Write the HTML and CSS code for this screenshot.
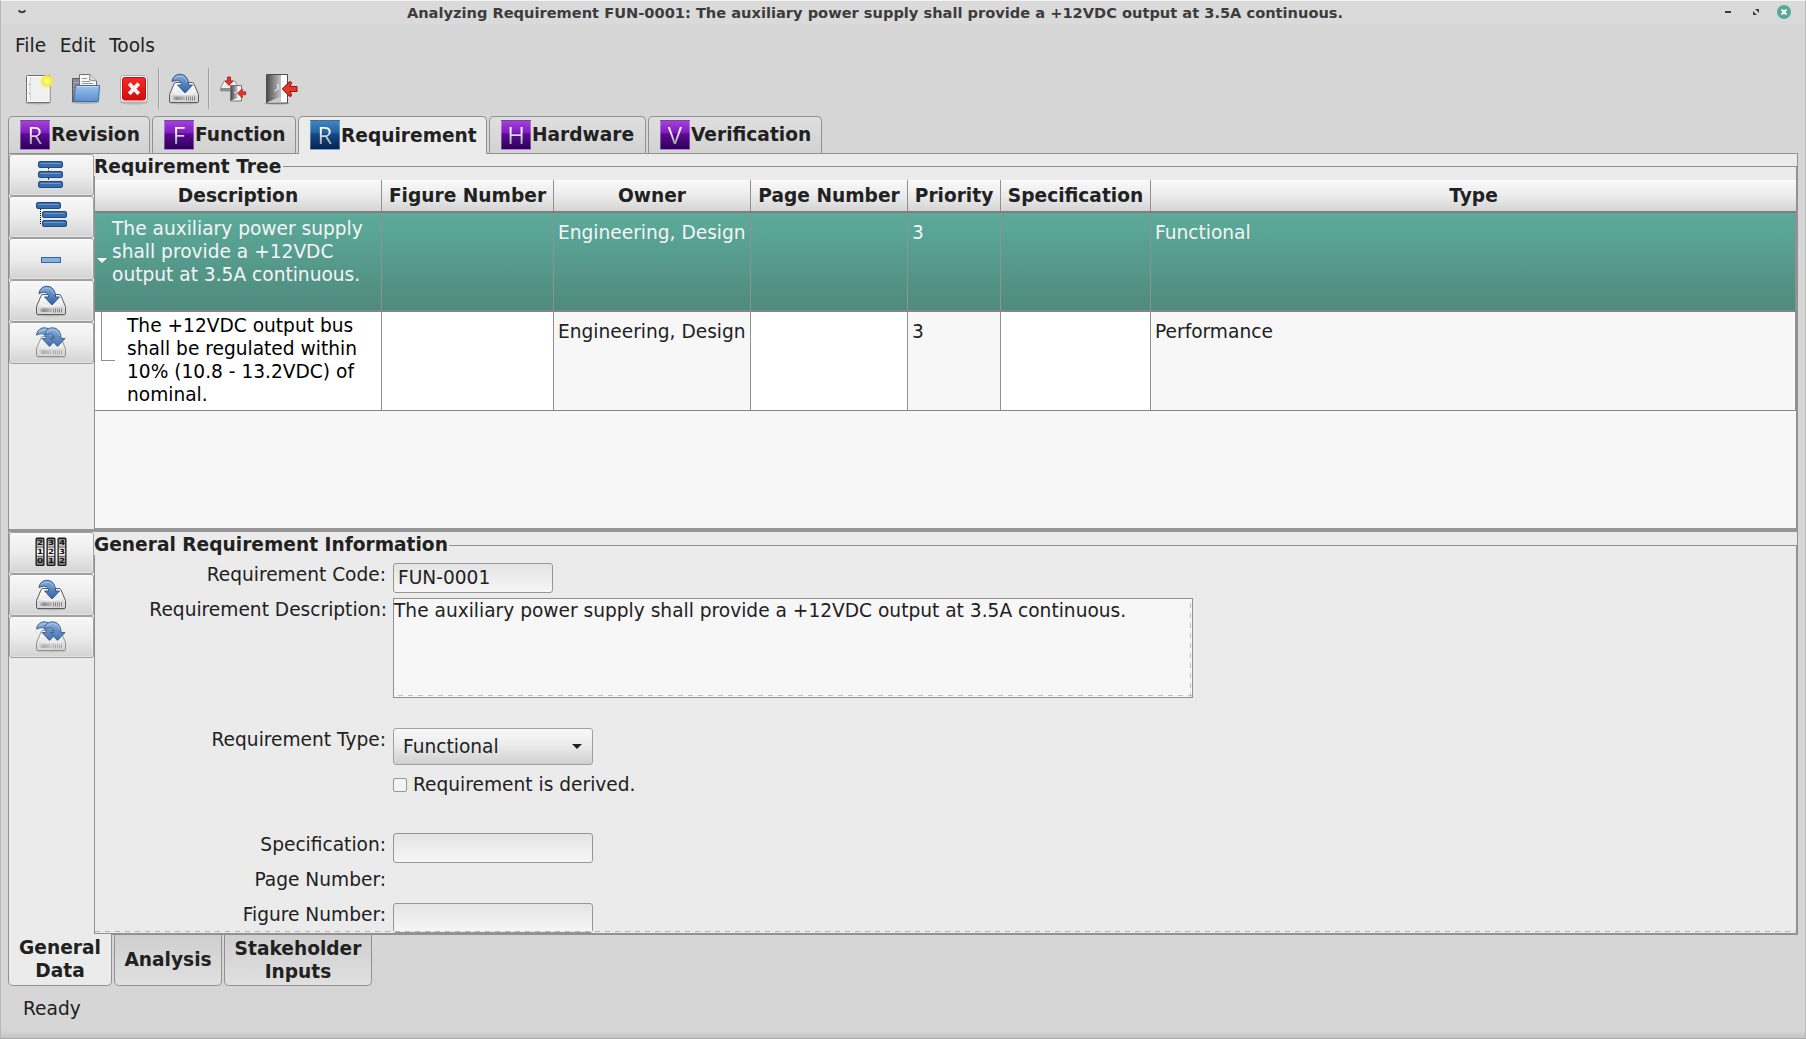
FILE: index.html
```html
<!DOCTYPE html>
<html lang="en">
<head>
<meta charset="utf-8">
<title>Analyzing Requirement FUN-0001</title>
<link rel="stylesheet" href="styles.css">
</head>
<body>
<svg class="defs" aria-hidden="true">
  <defs>
    <linearGradient id="gBlue" x1="0" y1="0" x2="0" y2="1"><stop offset="0" stop-color="#86abd8"/><stop offset="1" stop-color="#2f62a6"/></linearGradient>
    <linearGradient id="gFolder" x1="0" y1="0" x2="0" y2="1"><stop offset="0" stop-color="#9cc3ee"/><stop offset="1" stop-color="#5b8fcd"/></linearGradient>
    <linearGradient id="gDrive" x1="0" y1="0" x2="0" y2="1"><stop offset="0" stop-color="#ffffff"/><stop offset="1" stop-color="#d4d4d4"/></linearGradient>
    <linearGradient id="gPanel" x1="0" y1="0" x2="1" y2="0"><stop offset="0" stop-color="#c4c4c4"/><stop offset=".3" stop-color="#8c8c8c"/><stop offset="1" stop-color="#bdbdbd"/></linearGradient>
    <linearGradient id="gDoor" x1="0" y1="0" x2="1" y2="0"><stop offset="0" stop-color="#4c4c4c"/><stop offset="1" stop-color="#c4c4c4"/></linearGradient>
    <linearGradient id="gRed" x1="0" y1="0" x2="0" y2="1"><stop offset="0" stop-color="#f32b2b"/><stop offset="1" stop-color="#d40c0c"/></linearGradient>
    <linearGradient id="gDrum" x1="0" y1="0" x2="0" y2="1"><stop offset="0" stop-color="#8a8a8a"/><stop offset=".5" stop-color="#ffffff"/><stop offset="1" stop-color="#707070"/></linearGradient>
    <radialGradient id="gSun"><stop offset="0" stop-color="#ffffd0"/><stop offset=".45" stop-color="#fbf33a"/><stop offset=".75" stop-color="#f4ec3a" stop-opacity=".9"/><stop offset="1" stop-color="#f4ec3a" stop-opacity="0"/></radialGradient>
    <symbol id="drive" viewBox="0 0 32 32">
      <ellipse cx="16" cy="30" rx="15" ry="1.5" fill="#000" opacity=".16"/>
      <path d="M8 9.500H24Q25.500 9.500 26 11L30.500 21.500V28Q30.500 29.500 29 29.500H3Q1.500 29.500 1.500 28V21.500L6 11Q6.500 9.500 8 9.500Z" fill="url(#gDrive)" stroke="#5c5c5c"/>
      <path d="M2.500 22H29.500V28.500H2.500Z" fill="#d6d6d6"/>
      <path d="M5 23.500H17V27H5Z" fill="url(#gPanel)"/>
      <path d="M18.500 23.500V27.500M20.500 23.500V27.500M22.500 23.500V27.500M24.500 23.500V27.500M26.500 23.500V27.500" stroke="#858585"/>
      <ellipse cx="16" cy="17.500" rx="11" ry="3.600" fill="none" stroke="#fff" opacity=".8"/>
    </symbol>
    <symbol id="arrow" viewBox="0 0 32 32">
      <path d="M4 8.600C4.500 4 8 1.200 12 1.300C17.500 1.500 20.300 5.500 20.600 12H24.500L17 19.900L9.600 12H13.600C13.500 8 10.500 5.600 4 8.600Z" fill="url(#gBlue)" stroke="#2c5794" stroke-linejoin="round"/>
      <path d="M6.500 5.600C10 1.800 17.500 2.300 19 9" fill="none" stroke="#c3d7ee" opacity=".6"/>
    </symbol>
    <symbol id="save" viewBox="0 0 32 32"><use href="#drive"/><use href="#arrow"/></symbol>
    <symbol id="saveAll" viewBox="0 0 32 32">
      <use href="#drive" opacity=".6"/>
      <g opacity=".9"><use href="#arrow" x="-2.500" y="-.5"/><use href="#arrow" x="5.500" y="-.5"/></g>
    </symbol>
    <symbol id="bar" viewBox="0 0 25 7"><rect x=".5" y=".5" width="24" height="6" rx="1.500" fill="#3a6cab" stroke="#1f4b8c"/><path d="M2.500 2.500H22.500" stroke="#6d97cb"/></symbol>
    <symbol id="calc" viewBox="0 0 32 32">
      <g id="drum"><rect x=".5" y=".5" width="9" height="28.500" rx="1.500" fill="#181818"/><rect x="1.800" y="2" width="6.400" height="26" fill="url(#gDrum)"/><path d="M2 10H8M2 19.500H8" stroke="#444" stroke-width=".8"/></g>
      <use href="#drum" x="11"/><use href="#drum" x="22"/>
      <g class="digits" transform="scale(1.25 1)"><text x="4" y="8">2</text><text x="4" y="17.200">1</text><text x="4" y="26">0</text><text x="12.800" y="8">3</text><text x="12.800" y="17.200">2</text><text x="12.800" y="26">1</text><text x="21.600" y="8">4</text><text x="21.600" y="17.200">3</text><text x="21.600" y="26">2</text></g>
    </symbol>
    <symbol id="redArrow" viewBox="0 0 16 16"><path d="M.8 8L7.800 1Q10 .5 9.500 3L8 5.500H15V10.500H8L9.500 13Q10 15.500 7.800 15Z" fill="#e2392f" stroke="#9d130d" stroke-linejoin="round"/></symbol>
  </defs>
</svg>

<div class="window">
  <header class="titlebar">
    <svg class="title-menu" width="12" height="8" viewBox="0 0 12 8"><path d="M2.500 2.500Q6 6 9.500 2.500" fill="none" stroke="#3c3c3c" stroke-width="1.800"/></svg>
    <h1 class="title">Analyzing Requirement FUN-0001: The auxiliary power supply shall provide a +12VDC output at 3.5A continuous.</h1>
    <div class="controls">
      <svg width="14" height="14" viewBox="0 0 14 14"><path d="M4 6H10V8H4Z" fill="#3c3c3c"/></svg>
      <svg width="14" height="14" viewBox="0 0 14 14"><path d="M6 4H10V8ZM4 6V10H8Z" fill="#3c3c3c"/></svg>
      <svg width="14" height="14" viewBox="0 0 14 14"><circle cx="7" cy="7" r="7" fill="#56a897"/><path d="M4.500 4.500L9.500 9.500M9.500 4.500L4.500 9.500" stroke="#fff" stroke-width="1.800"/></svg>
    </div>
  </header>

  <nav class="menubar"><span>File</span><span>Edit</span><span>Tools</span></nav>

  <div class="toolbar">
    <span class="tool"><svg width="32" height="32" viewBox="0 0 32 32"><ellipse cx="16" cy="30" rx="13" ry="1.500" opacity=".18"/><rect x="4.500" y="2.500" width="23.500" height="27" rx="1" fill="#f0f0f0" stroke="#6e6e6e"/><rect x="5.500" y="3.500" width="21.500" height="25" fill="none" stroke="#fff"/><path d="M8.500 4V28" stroke="#d9d9d9"/><path d="M7 11.500H8M7 20.500H8" stroke="#888"/><circle cx="25" cy="8" r="7" fill="url(#gSun)"/></svg></span>
    <span class="tool"><svg width="32" height="32" viewBox="0 0 32 32"><ellipse cx="15" cy="29.500" rx="14" ry="1.500" opacity=".18"/><path d="M2.500 5.500H14V28.500H2.500Z" fill="#8b8b8b" stroke="#5a5a5a"/><path d="M3 9.500H10M3 12.500H10M3 15.500H10" stroke="#aaa"/><path d="M9.500 1.500H20L26.500 8V15H9.500Z" fill="#f6f6f6" stroke="#727272"/><path d="M20 1.500L19.500 7L26.500 8" fill="#ddd" stroke="#888"/><path d="M12 5.500H17M12 8.500H20M12 10.500H23" stroke="#999"/><path d="M5.500 12.500H29.500L28.500 27.500Q28.500 28.500 27.500 28.500H4.500Q3.500 28.500 4 27Z" fill="url(#gFolder)" stroke="#3a6cab"/><path d="M6.500 13.500H28.400" stroke="#c3dcf6"/></svg></span>
    <span class="tool"><svg width="32" height="32" viewBox="0 0 32 32"><ellipse cx="16" cy="29.500" rx="14" ry="2" opacity=".15"/><rect x="2.500" y="2.500" width="27" height="26.500" rx="3" fill="#fff" stroke="#aaa"/><rect x="4.500" y="4.500" width="23" height="22.500" rx="2" fill="url(#gRed)" stroke="#cf0d0d"/><path d="M12.500 12L19.500 19.500M19.500 12L12.500 19.500" stroke="#f4f4f4" stroke-width="3.800" stroke-linecap="square"/></svg></span>
    <i class="sep"></i>
    <span class="tool"><svg width="32" height="32"><use href="#save"/></svg></span>
    <i class="sep"></i>
    <span class="tool"><svg width="32" height="32" viewBox="0 0 32 32"><path d="M6 8H17L20 14V18H2.500V15.500Z" fill="#eee" stroke="#999"/><path d="M2.500 15H14V18H2.500Z" fill="#8d8d8d"/><path d="M9.500 4H12.500V8H15L11 12.500L7 8H9.500Z" fill="#e2392f" stroke="#9d130d" stroke-width=".8"/><path d="M12.500 12.500H23.500V28H12.500Z" fill="#f2f2f2" stroke="#777"/><path d="M13 13H19.500V25L13 27.500Z" fill="url(#gDoor)"/><path d="M16 20L18 19" stroke="#fff"/><use href="#redArrow" x="19" y="15.500" width="9.500" height="9.500"/></svg></span>
    <span class="tool"><svg width="36" height="32" viewBox="-2 0 36 32"><ellipse cx="11" cy="30.500" rx="13" ry="1.200" opacity=".2"/><path d="M.5 1.500H21.500V30H.5Z" fill="#fff" stroke="#4c4c4c"/><path d="M1 2H15V24L1 29.500Z" fill="url(#gDoor)"/><path d="M2 29.500L15 24V29.500Z" fill="#c9c9c9"/><path d="M8.500 18L12.500 15.500L11.500 11" fill="none" stroke="#fff"/><use href="#redArrow" x="15.500" y="7.500" width="16.500" height="17"/></svg></span>
  </div>

  <div class="tabs">
    <div class="tab tab-revision"><b class="badge"><span>R</span></b>Revision</div>
    <div class="tab tab-function"><b class="badge"><span>F</span></b>Function</div>
    <div class="tab tab-requirement active"><b class="badge blue"><span>R</span></b>Requirement</div>
    <div class="tab tab-hardware"><b class="badge"><span>H</span></b>Hardware</div>
    <div class="tab tab-verification"><b class="badge"><span>V</span></b>Verification</div>
  </div>

  <main class="notebook">
    <section class="pane upper">
      <div class="side">
        <button class="side-btn"><svg width="32" height="32"><path d="M13.500 8V22" stroke="#000" stroke-dasharray="2 1.500"/><use href="#bar" x="3" y="2" width="25" height="7"/><use href="#bar" x="3" y="12" width="25" height="7"/><use href="#bar" x="3" y="22" width="25" height="7"/></svg></button>
        <button class="side-btn"><svg width="32" height="32"><path d="M5.500 8V23" stroke="#000" stroke-dasharray="1 1"/><use href="#bar" x="1" y="1" width="25" height="7"/><use href="#bar" x="7" y="10" width="25" height="7"/><use href="#bar" x="7" y="19" width="25" height="7"/></svg></button>
        <button class="side-btn"><svg width="32" height="32"><rect x="6.500" y="14.500" width="19" height="5" fill="#88b1e0" stroke="#3465a4"/></svg></button>
        <button class="side-btn"><svg width="32" height="32"><use href="#save"/></svg></button>
        <button class="side-btn"><svg width="32" height="32"><use href="#saveAll"/></svg></button>
      </div>
      <div class="frame">
        <h2 class="frame-title">Requirement Tree</h2>
        <div class="frame-body tree">
          <div class="row head"><div>Description</div><div>Figure Number</div><div>Owner</div><div>Page Number</div><div>Priority</div><div>Specification</div><div>Type</div></div>
          <div class="row selected">
            <div class="desc"><svg class="expander" width="10" height="5" viewBox="0 0 10 5"><path d="M0 0H10L5 5Z" fill="#fff"/></svg><p>The auxiliary power supply shall provide a +12VDC output at 3.5A continuous.</p></div>
            <div></div><div>Engineering, Design</div><div></div><div>3</div><div></div><div>Functional</div>
          </div>
          <div class="row child">
            <div class="desc edit"><i class="branch"></i><p>The +12VDC output bus shall be regulated within 10% (10.8 - 13.2VDC) of nominal.</p></div>
            <div class="edit"></div><div>Engineering, Design</div><div class="edit"></div><div>3</div><div class="edit"></div><div>Performance</div>
          </div>
        </div>
      </div>
    </section>

    <section class="pane lower">
      <div class="side">
        <button class="side-btn"><svg width="32" height="32"><use href="#calc"/></svg></button>
        <button class="side-btn"><svg width="32" height="32"><use href="#save"/></svg></button>
        <button class="side-btn"><svg width="32" height="32"><use href="#saveAll"/></svg></button>
      </div>
      <div class="frame">
        <h2 class="frame-title">General Requirement Information</h2>
        <div class="frame-body form">
          <label>Requirement Code:</label><div class="entry code">FUN-0001</div>
          <label class="wide">Requirement Description:</label><div class="textview">The auxiliary power supply shall provide a +12VDC output at 3.5A continuous.</div>
          <label>Requirement Type:</label>
          <div class="stack">
            <div class="combo">Functional<svg width="10" height="5" viewBox="0 0 10 5"><path d="M0 0H10L5 5Z" fill="#222"/></svg></div>
            <div class="check"><i class="box"></i>Requirement is derived.</div>
          </div>
          <label>Specification:</label><div class="entry"></div>
          <label>Page Number:</label><div></div>
          <label>Figure Number:</label><div class="entry"></div>
        </div>
      </div>
    </section>
  </main>

  <div class="bottom-tabs">
    <div class="btab active">General<br>Data</div>
    <div class="btab analysis">Analysis</div>
    <div class="btab inputs">Stakeholder<br>Inputs</div>
  </div>

  <footer class="status">Ready</footer>
</div>
</body>
</html>
```
FILE: styles.css
```css
* { box-sizing: border-box; }

body {
  margin: 0;
  font: 18.6px/23px "DejaVu Sans", sans-serif;
  color: #212121;
}

h1, h2, p { margin: 0; font-size: inherit; }
i { font-style: normal; }
svg { display: block; flex: none; }
.defs { position: absolute; width: 0; height: 0; }
.digits { font: bold 7px "DejaVu Sans", sans-serif; text-anchor: middle; fill: #111; }

.window {
  display: flex;
  flex-direction: column;
  width: 1806px;
  height: 1039px;
  overflow: hidden;
  border: 1px solid #b8b8b8;
  border-top-color: #f4f4f4;
  border-bottom-color: #a8a8a8;
  background: linear-gradient(#d6d6d6, #d6d6d6 1029px, #c6c6c6);
}

/* Title bar */
.titlebar {
  display: grid;
  grid-template-columns: 120px 1fr 176px;
  flex: none;
  height: 23px;
  background: #dadada;
}
.title-menu { margin: 7px 0 0 15px; }
.title {
  font-size: 14.61px;
  text-align: center;
  color: #3c3c3c;
  white-space: nowrap;
}
.controls {
  display: flex;
  justify-content: flex-end;
  gap: 14px;
  padding: 4px 14px 0 0;
}

/* Menu and toolbar */
.menubar {
  display: flex;
  flex: none;
  gap: 13.5px;
  height: 42px;
  padding: 10px 0 0 14px;
}
.toolbar {
  display: flex;
  flex: none;
  height: 50px;
  padding-left: 13px;
}
.tool {
  display: flex;
  justify-content: center;
  width: 48px;
  padding-top: 7px;
}
.sep {
  width: 2px;
  height: 41px;
  margin-top: 2px;
  border-left: 1px solid #a0a0a0;
  border-right: 1px solid #e0e0e0;
}

/* Upper tabs */
.tabs {
  display: flex;
  flex: none;
  gap: 2px;
  height: 37px;
  padding-left: 7px;
}
.tab {
  display: flex;
  padding: 6px 0 0 11px;
  border: 1px solid #919191;
  border-bottom: 0;
  border-radius: 5px 5px 0 0;
  background: linear-gradient(#dfdfdf, #d2d2d2);
  font-weight: bold;
}
.tab.active {
  position: relative;
  z-index: 1;
  height: 38px;
  padding-top: 7px;
  background: #ebebeb;
}
.tab-revision { width: 142px; }
.tab-function { width: 144px; }
.tab-requirement { width: 189px; }
.tab-hardware { width: 157px; }
.tab-verification { width: 174px; }

.badge {
  flex: none;
  width: 30px;
  height: 30px;
  margin: -3px 1px 0 0;
  border: 1px solid #ffffff4d;
  background: linear-gradient(#a63fdc, #7c1bbd 44%, #5e0a96 45%, #2b0057);
  font: 400 24px/28px "Open Sans", sans-serif;
  text-align: center;
}
.tab.active .badge { margin-top: -4px; }
.badge.blue { background: linear-gradient(#3f86bf, #21609f 44%, #134a88 45%, #072350); }
.badge span {
  display: block;
  color: transparent;
  background: linear-gradient(#fff 30%, #a0a0a0 85%);
  background-clip: text;
  -webkit-background-clip: text;
}

/* Notebook panes */
.notebook {
  flex: none;
  width: 1790px;
  height: 782px;
  margin-left: 7px;
  border: 1px solid #919191;
  background: #ebebeb;
}
.pane {
  display: grid;
  grid-template-columns: 85px 1fr;
}
.upper { height: 378px; border-bottom: 3px solid #969696; }
.lower { height: 402px; }

.side { display: flex; flex-direction: column; }
.side-btn {
  display: flex;
  align-items: center;
  justify-content: center;
  width: 85px;
  height: 42px;
  padding: 0 2px 0 0;
  border: 1px solid #a0a0a0;
  border-radius: 3px;
  background: linear-gradient(#f8f8f8, #ececec 50%, #d3d3d3);
  box-shadow: inset 0 0 0 1px #ffffff66;
}

.frame { display: flex; flex-direction: column; min-width: 0; min-height: 0; }
.frame-title {
  display: flex;
  flex: none;
  align-items: flex-end;
  height: 22px;
  line-height: 19px;
  white-space: nowrap;
}
.frame-title::after {
  content: "";
  flex: 1;
  height: 9px;
  margin-left: 1px;
  border: solid #919191;
  border-width: 1px 1px 0 0;
}
.upper .frame-title::after { margin-left: 2px; }
.frame-body {
  flex: 1;
  min-height: 0;
  border: solid #919191;
  border-width: 0 1px 0 1px;
}
.lower .frame-title { height: 23px; line-height: 21px; }

/* Requirement tree */
.tree { padding-top: 4px; border-bottom: 1px solid #969696; background: linear-gradient(#ebebeb 4px, #f7f7f7 4px); }
.row {
  display: grid;
  grid-template-columns: 287px 172px 197px 157px 93px 150px 1fr;
}
.row > div { border-right: 1px solid #919191; }
.head {
  height: 33px;
  border-bottom: 2px solid #7f7f7f;
  background: linear-gradient(#f9f9f9, #ececec 50%, #d4d4d4);
  box-shadow: inset 0 1px #fff;
  font-weight: bold;
  text-align: center;
}
.row.head > div { padding-top: 4px; }
.row.head > div:last-child { border-right: 0; }
.selected, .child { height: 99px; border-bottom: 2px solid #858585; }
.selected > div, .child > div { padding: 8px 0 0 4px; white-space: nowrap; }
.selected {
  color: #f5f5f5;
  background: linear-gradient(#5cab9b, #4f8a7e);
}
.child { border-bottom-width: 1px; }
.row > .desc { display: flex; padding: 0; white-space: normal; }
.desc p { width: 254px; padding-top: 4px; }
.selected .expander { margin: 45px 5px 0 2px; }
.edit { background: #fff; color: #000; }
.child .desc p { padding-top: 2px; }
.branch {
  flex: none;
  width: 14px;
  height: 49px;
  margin: 0 12px 0 6px;
  border: solid #919191;
  border-width: 0 0 1px 1px;
}

/* Requirement form */
.form {
  position: relative;
  display: grid;
  grid-template-columns: 291px 1fr;
  grid-template-rows: 35px 130px 105px 35px 35px 30px;
  column-gap: 7px;
  align-items: start;
  padding-top: 8px;
  border-bottom: 1px solid #919191;
}
.form::after {
  content: "";
  position: absolute;
  left: 0;
  right: 0;
  bottom: 1px;
  height: 1px;
  background: repeating-linear-gradient(90deg, #b4b4b4 0 5px, #ebebeb 5px 10px);
}
.form label { text-align: right; white-space: nowrap; }
.form .wide { margin-right: -1px; }
.entry {
  width: 200px;
  height: 30px;
  padding: 2px 0 0 4px;
  border: 1px solid #969696;
  border-radius: 3px;
  background: linear-gradient(#e4e4e4, #f6f6f6);
}
.entry.code { width: 160px; }
.textview {
  position: relative;
  width: 800px;
  height: 100px;
  border: 1px solid #919191;
  background: #f7f7f7;
  white-space: nowrap;
}
.textview::before, .textview::after { content: ""; position: absolute; }
.textview::before {
  left: 4px;
  right: 0;
  bottom: 1px;
  height: 1px;
  background: repeating-linear-gradient(90deg, #c0c0c0 0 5px, transparent 5px 10px);
}
.textview::after {
  top: 4px;
  bottom: 0;
  right: 1px;
  width: 1px;
  background: repeating-linear-gradient(#c0c0c0 0 5px, transparent 5px 10px);
}
.combo {
  display: flex;
  align-items: center;
  justify-content: space-between;
  width: 200px;
  height: 37px;
  padding: 0 10px 0 9px;
  border: 1px solid #a0a0a0;
  border-radius: 3px;
  background: linear-gradient(#f9f9f9, #ececec 45%, #d0d0d0);
}
.check { display: flex; gap: 6px; padding-top: 8px; }
.box {
  width: 14px;
  height: 14px;
  margin-top: 5px;
  border: 1px solid #969696;
  border-radius: 2px;
  background: #f4f4f4;
}

/* Bottom tabs and status */
.bottom-tabs {
  display: flex;
  flex: none;
  gap: 2px;
  height: 51px;
  padding-left: 7px;
}
.btab {
  display: grid;
  place-content: center;
  width: 108px;
  border: 1px solid #919191;
  border-top: 0;
  border-radius: 0 0 5px 5px;
  background: linear-gradient(#cfcfcf, #e0e0e0);
  font-weight: bold;
  text-align: center;
}
.btab.active {
  position: relative;
  width: 104px;
  height: 52px;
  margin-top: -1px;
  padding-bottom: 2px;
  background: #ebebeb;
}
.btab.analysis { padding-bottom: 2px; }
.btab.inputs { width: 148px; }
.status { padding: 11px 0 0 22px; }
```
